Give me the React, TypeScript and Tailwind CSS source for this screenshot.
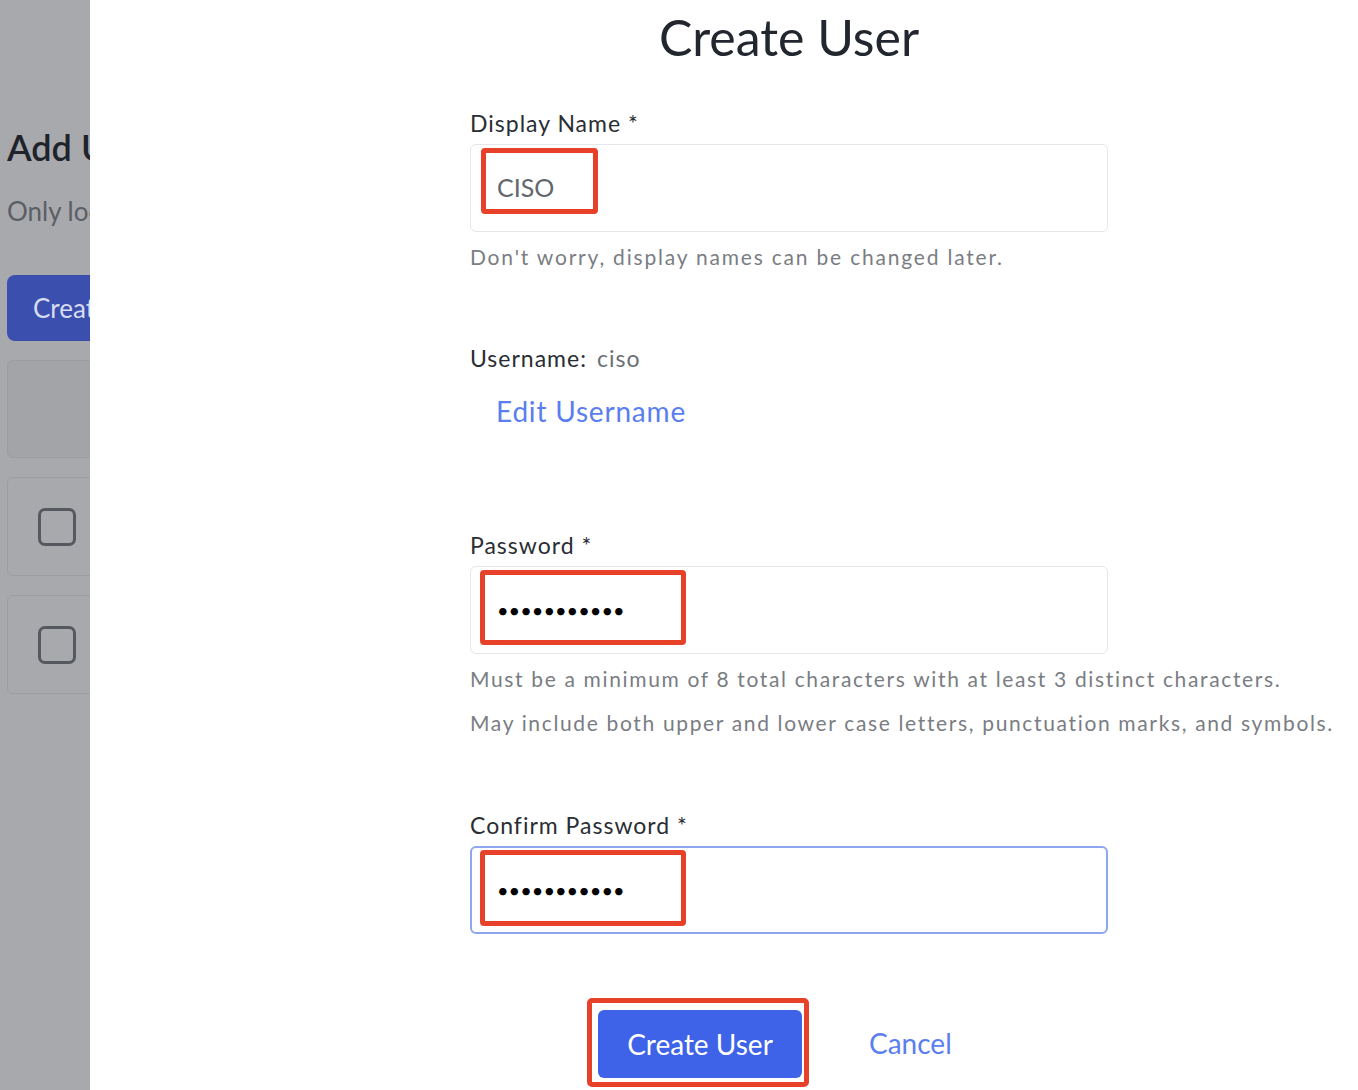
import React from 'react';

const font = { fontFamily: 'Lato, "Open Sans", sans-serif' };

function Annot({ className }: { className: string }) {
  return <div className={`absolute border-[5px] border-[#e8412a] rounded-[4px] ${className}`} />;
}

function Dots() {
  return <span className="text-[20px] tracking-[0px] text-black leading-none">•••••••••••</span>;
}

export default function App() {
  return (
    <div className="flex w-[1358px] h-[1090px] overflow-hidden" style={font}>
      {/* dimmed page behind the modal */}
      <div className="w-[90px] shrink-0 bg-[#a8a9ad] overflow-hidden">
        <div className="w-[400px] pl-[7px]">
          <div className="mt-[125px] text-[36px] leading-[44px] font-semibold text-[#1e232c]">Add Users</div>
          <div className="mt-[26px] text-[26px] leading-[32px] text-[#5b5e66]">Only local users</div>
          <div className="mt-[48px] h-[66px] w-[300px] rounded-[8px] bg-[#3a4fae] pl-[26px] flex items-center text-[26px] text-[#d9dcf0]">
            Create User
          </div>
          <div className="mt-[19px] h-[98px] w-[300px] rounded-[6px] border border-[#9c9da1] bg-[#a3a4a8]" />
          <div className="mt-[19px] h-[99px] w-[300px] rounded-[6px] border border-[#9c9da1] flex items-center pl-[30px]">
            <div className="w-[38px] h-[38px] rounded-[7px] border-[3px] border-[#55585e]" />
          </div>
          <div className="mt-[19px] h-[99px] w-[300px] rounded-[6px] border border-[#9c9da1] flex items-center pl-[30px]">
            <div className="w-[38px] h-[38px] rounded-[7px] border-[3px] border-[#55585e]" />
          </div>
        </div>
      </div>

      {/* modal */}
      <div className="flex-1 bg-white pl-[380px]">
        <div className="w-[638px]">
          <h1 className="mt-[7px] text-center text-[50px] leading-[60px] text-[#22262e]">Create User</h1>

          <div className="mt-[40px] text-[23px] leading-[32px] tracking-[1px] text-[#2a2d33]">Display Name *</div>
          <div className="relative mt-[5px] h-[88px] rounded-[6px] border border-[#e4e6ea] flex items-center pl-[26px] text-[25px] text-[#62666d]">
            CISO
            <Annot className="left-[10px] top-[3px] w-[117px] h-[66px]" />
          </div>
          <div className="mt-[11px] text-[21px] leading-[28px] tracking-[1.8px] text-[#7a7d83] whitespace-nowrap">
            Don't worry, display names can be changed later.
          </div>

          <div className="mt-[71px] text-[23px] leading-[32px] tracking-[1px] text-[#2a2d33]">
            Username:<span className="ml-[10px] text-[#6b6f76]">ciso</span>
          </div>
          <div className="mt-[19px] pl-[26px] text-[28px] leading-[36px] tracking-[0.8px] text-[#5a7ef0]">Edit Username</div>

          <div className="mt-[100px] text-[23px] leading-[32px] tracking-[1px] text-[#2a2d33]">Password *</div>
          <div className="relative mt-[5px] h-[88px] rounded-[6px] border border-[#e4e6ea] flex items-center pl-[26px]">
            <Dots />
            <Annot className="left-[9px] top-[3px] w-[206px] h-[75px]" />
          </div>
          <div className="mt-[3px] text-[21px] leading-[44px] tracking-[1.65px] text-[#7a7d83] whitespace-nowrap">
            <div>Must be a minimum of 8 total characters with at least 3 distinct characters.</div>
            <div>May include both upper and lower case letters, punctuation marks, and symbols.</div>
          </div>

          <div className="mt-[64px] text-[23px] leading-[32px] tracking-[1px] text-[#2a2d33]">Confirm Password *</div>
          <div className="relative mt-[5px] h-[88px] rounded-[6px] border-2 border-[#8ea5f1] flex items-center pl-[25px]">
            <Dots />
            <Annot className="left-[8px] top-[2px] w-[206px] h-[76px]" />
          </div>

          <div className="mt-[64px] flex items-center">
            <div className="ml-[117px] border-[5px] border-[#e8412a] rounded-[5px] pl-[6px] pr-[2px] pt-[7px] pb-[4px]">
              <button className="w-[204px] h-[68px] rounded-[6px] bg-[#3e63e8] text-white text-[28px]">Create User</button>
            </div>
            <button className="ml-[60px] text-[28px] text-[#5a7ef0]">Cancel</button>
          </div>
        </div>
      </div>
    </div>
  );
}
